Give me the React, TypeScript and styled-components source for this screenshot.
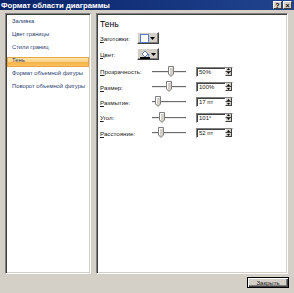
import React from "react";
import styled, { createGlobalStyle } from "styled-components";

const FONT = `"Liberation Sans", Arial, sans-serif`;

const GlobalStyle = createGlobalStyle`
  html, body {
    margin: 0;
    padding: 0;
    background: #d4d0c8;
  }
  body {
    font-family: ${FONT};
  }
`;

const Window = styled.div`
  width: 294px;
  height: 293px;
  display: flex;
  flex-direction: column;
  background: #d4d0c8;
  overflow: hidden;
`;

const TitleBar = styled.div`
  height: 10px;
  display: flex;
  align-items: center;
  gap: 1px;
  padding: 0 2px 0 1px;
  background: linear-gradient(90deg, #0a246a, #163680 60%, #22448e);
`;

const Title = styled.span`
  flex: 1;
  color: #fff;
  font: bold 7.7px ${FONT};
  white-space: nowrap;
`;

const TitleButton = styled.span`
  width: 9px;
  height: 8px;
  box-sizing: border-box;
  display: flex;
  align-items: center;
  justify-content: center;
  background: #d4d0c8;
  border: 1px solid;
  border-color: #fff #404040 #404040 #fff;
  font: bold 7px ${FONT};
  line-height: 1;
  color: #000;
`;

const Body = styled.div`
  display: flex;
  gap: 5px;
  padding: 3px 6px 0 5px;
  height: 261px;
`;

const Sunken = styled.div`
  box-sizing: border-box;
  height: 100%;
  background: #fff;
  border: 1px solid;
  border-color: #808080 #fff #fff #808080;
  box-shadow: inset 1px 1px 0 #404040, inset -1px -1px 0 #d4d0c8;
`;

const NavPanel = styled(Sunken)`
  width: 86px;
  padding: 4px 1px 0 1px;
  display: flex;
  flex-direction: column;
  gap: 3px;
`;

const NavItem = styled.div<{ $active?: boolean }>`
  height: 10px;
  line-height: 10px;
  padding-left: 5px;
  font: 5.8px ${FONT};
  color: #2a3d72;
  white-space: nowrap;
  background: ${({ $active }) =>
    $active
      ? "linear-gradient(180deg, #fde8bd 0%, #fcd488 45%, #f8b449 55%, #f9c56a 100%)"
      : "transparent"};
  box-shadow: ${({ $active }) => ($active ? "inset 0 0 0 1px #e9a63c" : "none")};
`;

const ContentPanel = styled(Sunken)`
  width: 192px;
  padding: 5px 3px 0 3px;
`;

const Heading = styled.div`
  height: 13px;
  font: 8.5px ${FONT};
  color: #000;
`;

const PickRow = styled.div`
  display: flex;
  align-items: center;
  height: 12px;
  margin-bottom: 4px;
`;

const PickLabel = styled.span`
  width: 37px;
  font: 6.2px ${FONT};
  color: #222;
  white-space: nowrap;
`;

const Key = styled.span`
  text-decoration: underline;
`;

const DropButton = styled.div`
  width: 22px;
  height: 12px;
  box-sizing: border-box;
  display: flex;
  align-items: center;
  padding-left: 2px;
  gap: 1px;
  background: #d4d0c8;
  border: 1px solid;
  border-color: #fff #404040 #404040 #fff;
  box-shadow: inset -1px -1px 0 #808080;
`;

const Sliders = styled.div`
  margin-top: 2px;
  display: flex;
  flex-direction: column;
`;

const SliderRow = styled.div`
  display: flex;
  align-items: center;
  height: 15.4px;
`;

const SliderLabel = styled.span`
  width: 52px;
  font: 6.2px ${FONT};
  color: #222;
  white-space: nowrap;
`;

const Track = styled.div`
  position: relative;
  width: 34px;
  height: 2px;
  box-sizing: border-box;
  border-top: 1px solid #6a6a6a;
  border-bottom: 1px solid #e8e8e8;
  margin-right: 10px;
`;

const Thumb = styled.svg<{ $pos: number }>`
  position: absolute;
  left: ${({ $pos }) => $pos - 3}px;
  top: -6px;
`;

const SpinBox = styled.div`
  width: 37px;
  height: 10px;
  box-sizing: border-box;
  display: flex;
  background: #fff;
  border: 1px solid;
  border-color: #808080 #fff #fff #808080;
  box-shadow: inset 1px 1px 0 #404040;
`;

const SpinText = styled.span`
  flex: 1;
  padding-left: 2px;
  font: 6px ${FONT};
  line-height: 8px;
  color: #222;
`;

const Spinner = styled.div`
  width: 7px;
  display: flex;
  flex-direction: column;
`;

const SpinHalf = styled.div`
  flex: 1;
  box-sizing: border-box;
  display: flex;
  align-items: center;
  justify-content: center;
  background: #d4d0c8;
  border: 1px solid;
  border-color: #fff #404040 #404040 #fff;
  border-width: 0 1px 1px 1px;
`;

const Footer = styled.div`
  display: flex;
  justify-content: flex-end;
  padding: 3px 5px 0 0;
`;

const CloseButton = styled.div`
  width: 42px;
  height: 11px;
  box-sizing: border-box;
  display: flex;
  align-items: center;
  justify-content: center;
  background: #d4d0c8;
  border: 1px solid #000;
  box-shadow: inset 1px 1px 0 #fff, inset -1px -1px 0 #404040, inset -2px -2px 0 #808080;
  font: 6px ${FONT};
  color: #222;
`;

const Arrow = () => (
  <svg width="5" height="3" viewBox="0 0 5 3">
    <polygon points="0,0 5,0 2.5,3" fill="#000" />
  </svg>
);

const Tri = ({ up }: { up?: boolean }) => (
  <svg width="3" height="2" viewBox="0 0 3 2">
    <polygon points={up ? "0,2 3,2 1.5,0" : "0,0 3,0 1.5,2"} fill="#000" />
  </svg>
);

const ThumbShape = ({ pos }: { pos: number }) => (
  <Thumb $pos={pos} width="6" height="11" viewBox="0 0 6 11">
    <polygon points="0.5,0.5 5.5,0.5 5.5,8 3,10.5 0.5,8" fill="#d4d0c8" stroke="#808080" strokeWidth="1" />
    <polyline points="1.5,8 1.5,1.5 4.5,1.5" fill="none" stroke="#fff" strokeWidth="1" />
  </Thumb>
);

const navItems = [
  "Заливка",
  "Цвет границы",
  "Стили границ",
  "Тень",
  "Формат объемной фигуры",
  "Поворот объемной фигуры",
];

const sliders = [
  { key: "П", rest: "розрачность:", pos: 19, value: "50%" },
  { key: "Р", rest: "азмер:", pos: 17, value: "100%" },
  { key: "Р", rest: "азмытие:", pos: 6, value: "17 пт" },
  { key: "У", rest: "гол:", pos: 10, value: "101°" },
  { key: "Р", rest: "асстояние:", pos: 9, value: "52 пт" },
];

export default function App() {
  return (
    <>
      <GlobalStyle />
      <Window>
        <TitleBar>
          <Title>Формат области диаграммы</Title>
          <TitleButton>?</TitleButton>
          <TitleButton>×</TitleButton>
        </TitleBar>
        <Body>
          <NavPanel>
            {navItems.map((item) => (
              <NavItem key={item} $active={item === "Тень"}>
                {item}
              </NavItem>
            ))}
          </NavPanel>
          <ContentPanel>
            <Heading>Тень</Heading>
            <PickRow>
              <PickLabel>
                <Key>З</Key>аготовки:
              </PickLabel>
              <DropButton>
                <svg width="9" height="9" viewBox="0 0 9 9">
                  <rect x="0.5" y="0.5" width="8" height="8" fill="#fff" stroke="#5b7fc4" />
                </svg>
                <Arrow />
              </DropButton>
            </PickRow>
            <PickRow>
              <PickLabel>
                <Key>Ц</Key>вет:
              </PickLabel>
              <DropButton>
                <svg width="10" height="9" viewBox="0 0 10 9">
                  <polygon points="2,4 5,1 8,4 5,7" fill="#fff" stroke="#4060a0" strokeWidth="0.8" />
                  <path d="M8 4 Q9 5.5 8.5 6.5" fill="none" stroke="#3070d0" strokeWidth="1" />
                  <rect x="0" y="7" width="10" height="2" fill="#000" />
                </svg>
                <Arrow />
              </DropButton>
            </PickRow>
            <Sliders>
              {sliders.map((s, i) => (
                <SliderRow key={i}>
                  <SliderLabel>
                    <Key>{s.key}</Key>
                    {s.rest}
                  </SliderLabel>
                  <Track>
                    <ThumbShape pos={s.pos} />
                  </Track>
                  <SpinBox>
                    <SpinText>{s.value}</SpinText>
                    <Spinner>
                      <SpinHalf>
                        <Tri up />
                      </SpinHalf>
                      <SpinHalf>
                        <Tri />
                      </SpinHalf>
                    </Spinner>
                  </SpinBox>
                </SliderRow>
              ))}
            </Sliders>
          </ContentPanel>
        </Body>
        <Footer>
          <CloseButton>Закрыть</CloseButton>
        </Footer>
      </Window>
    </>
  );
}
